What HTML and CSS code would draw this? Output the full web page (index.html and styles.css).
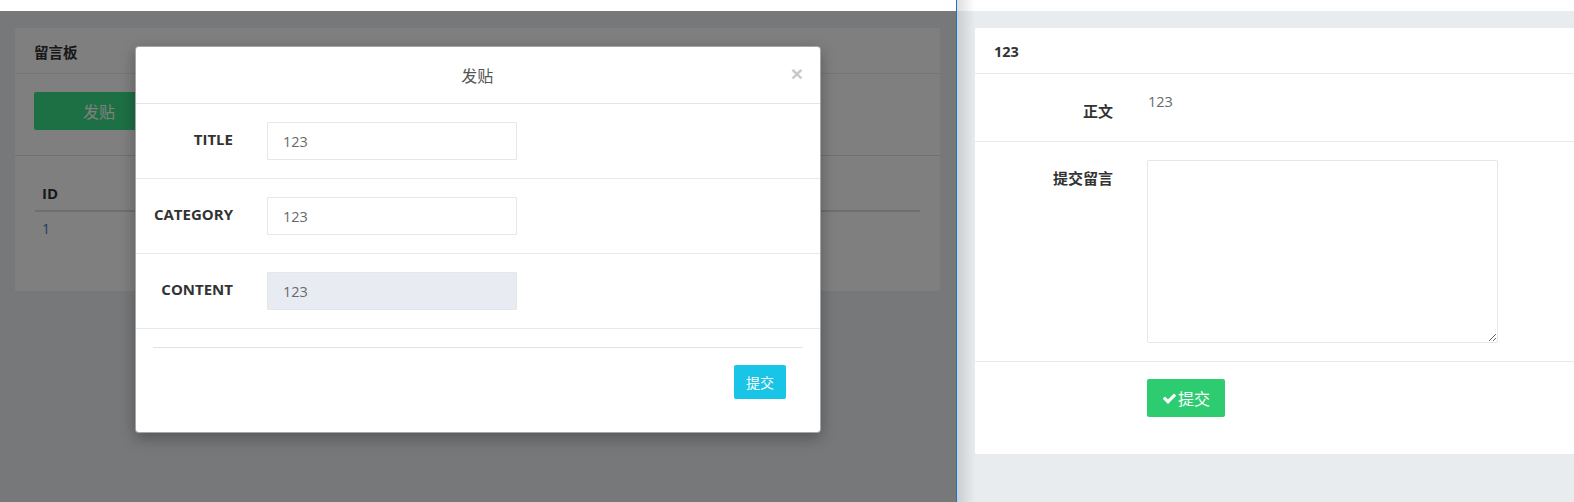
FILE: index.html
```html
<!DOCTYPE html>
<html lang="zh">
<head>
<meta charset="utf-8">
<title>留言板</title>
<link rel="stylesheet" href="styles.css">
</head>
<body>
<div class="screen">
  <div class="pane pane-left">
    <div class="topstrip"></div>
    <div class="viewport">
      <div class="page">
        <div class="card">
          <div class="card-head">留言板</div>
          <div class="card-tools"><button class="btn-post">发贴</button></div>
          <div class="card-body">
            <table class="tbl">
              <thead><tr><th>ID</th></tr></thead>
              <tbody><tr><td><a class="link">1</a></td></tr></tbody>
            </table>
          </div>
        </div>
      </div>
      <div class="overlay"></div>
      <div class="modal">
        <div class="modal-head">
          <div class="modal-title">发贴</div>
          <span class="modal-close">×</span>
        </div>
        <div class="mrow">
          <label class="mlabel">TITLE</label>
          <input class="minput" value="123">
        </div>
        <div class="mrow">
          <label class="mlabel">CATEGORY</label>
          <input class="minput" value="123">
        </div>
        <div class="mrow">
          <label class="mlabel">CONTENT</label>
          <input class="minput minput-ro" value="123" readonly>
        </div>
        <div class="modal-foot">
          <div class="foot-line"></div>
          <div class="foot-actions"><button class="btn-submit">提交</button></div>
        </div>
      </div>
    </div>
  </div>
  <div class="divider"></div>
  <div class="pane pane-right">
    <div class="topstrip"></div>
    <div class="page page-right">
      <div class="card card-detail">
        <div class="card-head">123</div>
        <div class="drow drow-body">
          <div class="dlabel dlabel-body">正文</div>
          <div class="dvalue">123</div>
        </div>
        <div class="drow drow-msg">
          <div class="dlabel dlabel-msg">提交留言</div>
          <textarea class="dtext"></textarea>
        </div>
        <div class="drow drow-act">
          <div class="dlabel"></div>
          <button class="btn-ok"><svg class="ico-check" viewBox="0 0 1792 1792"><path d="M1671 566q0 40-28 68l-724 724-136 136q-28 28-68 28t-68-28l-136-136-362-362q-28-28-28-68t28-68l136-136q28-28 68-28t68 28l294 295 656-657q28-28 68-28t68 28l136 136q28 28 28 68z"/></svg>提交</button>
        </div>
      </div>
    </div>
    <div class="shadow"></div>
  </div>
</div>
</body>
</html>
```

FILE: styles.css
```css
* { box-sizing: border-box; }
html, body { margin: 0; padding: 0; }
body {
  width: 1574px;
  height: 502px;
  overflow: hidden;
  font-family: "Open Sans", "Noto Sans CJK SC", sans-serif;
  font-size: 14px;
  color: #676a6c;
  background: #fff;
}
.screen { display: flex; height: 502px; }
.pane { display: flex; flex-direction: column; height: 502px; }
.pane-left { width: 956px; flex: none; }
.pane-right { flex: 1; position: relative; overflow: hidden; background: #e9ecef; }
.divider { width: 1px; flex: none; background: #1b74cc; }
.topstrip { height: 11px; background: #fff; flex: none; }

.viewport { position: relative; flex: 1; background: #eef0f4; }
.page { padding: 17px 16px 0 15px; }
.card { background: #fff; border-radius: 2px; height: 263px; }
.card-head {
  height: 46px;
  padding: 2px 19px 0;
  display: flex;
  align-items: center;
  font-weight: 700;
  color: #333;
  font-size: 14.5px;
  border-bottom: 1px solid #e7eaec;
}
.card-tools { padding: 18px 19px 25px; border-bottom: 1px solid #e0e0e4; }
.btn-post {
  display: block;
  width: 130px;
  height: 38px;
  border: none;
  border-radius: 2px;
  background: #3ae088;
  color: #fff;
  font-family: "Noto Sans CJK SC", sans-serif;
  font-size: 16px;
}
.card-body { padding: 20px; }
.tbl { width: 100%; border-collapse: collapse; }
.tbl th {
  text-align: left;
  padding: 8px 7px;
  line-height: 18px;
  font-weight: 700;
  font-size: 15px;
  color: #333;
  border-bottom: 2px solid #dcdce2;
}
.tbl td { padding: 8px 7px; line-height: 18px; }
.link { color: #3a76c0; }

.overlay { position: absolute; inset: 0; background: rgba(0,0,0,.5); }
.modal {
  position: absolute;
  top: 35px;
  left: 0;
  right: 0;
  margin: 0 auto;
  width: 686px;
  background: #fff;
  border: 1px solid rgba(0,0,0,.35);
  border-radius: 4px;
  box-shadow: 0 5px 15px rgba(0,0,0,.3);
}
.modal-head {
  height: 57px;
  display: flex;
  align-items: center;
  padding: 0 17px 0 20px;
  border-bottom: 1px solid #e5e5e5;
}
.modal-title {
  flex: 1;
  text-align: center;
  font-family: "Noto Sans CJK SC", sans-serif;
  font-size: 16px;
  color: #555;
  padding-left: 8px;
}
.modal-close {
  font-family: "Liberation Sans", sans-serif;
  font-size: 21px;
  font-weight: 700;
  color: #c8c8c8;
  line-height: 1;
  margin-top: -4px;
}
.mrow {
  display: flex;
  align-items: flex-start;
  padding: 18px 0;
  height: 75px;
  border-bottom: 1px solid #e7eaec;
}
.mlabel {
  width: 97px;
  text-align: right;
  font-weight: 700;
  color: #333;
  font-size: 15px;
  line-height: 35px;
}
.minput {
  margin-left: 34px;
  width: 250px;
  height: 38px;
  border: 1px solid #e5e6e7;
  border-radius: 1px;
  padding: 0 15px;
  font-family: "Open Sans", sans-serif;
  font-size: 14.5px;
  color: #676a6c;
  background: #fff;
  outline: none;
}
.minput-ro { background: #e8ecf2; }
.modal-foot { padding: 18px 17px 33px; }
.foot-line { height: 1px; background: #e2e2e2; }
.foot-actions { display: flex; justify-content: flex-end; padding: 17px 17px 0 0; }
.btn-submit {
  width: 52px;
  height: 34px;
  border: none;
  border-radius: 2px;
  background: #18c5e7;
  color: #fff;
  font-family: "Noto Sans CJK SC", sans-serif;
  font-size: 14px;
  padding: 0;
}

.page-right { padding: 17px 0 0 18px; }
.card-detail { height: 426px; width: 640px; border-radius: 2px 0 0 2px; }
.drow {
  display: flex;
  align-items: flex-start;
  border-bottom: 1px solid #e7eaec;
}
.dlabel {
  width: 138px;
  flex: none;
  text-align: right;
  font-family: "Noto Sans CJK SC", sans-serif;
  font-weight: 700;
  color: #333;
  font-size: 15px;
  line-height: 20px;
}
.drow-body { height: 68px; padding-top: 18px; }
.dlabel-body { padding-top: 9px; }
.dvalue { margin-left: 35px; line-height: 20px; color: #676a6c; font-size: 14.5px; }
.drow-msg { padding: 18px 0; }
.dlabel-msg { padding-top: 8px; }
.dtext {
  margin-left: 34px;
  width: 351px;
  height: 183px;
  border: 1px solid #e5e6e7;
  border-radius: 2px;
  display: block;
  resize: both;
  outline: none;
}
.drow-act { border-bottom: none; padding-top: 17px; }
.btn-ok {
  margin-left: 34px;
  width: 78px;
  height: 38px;
  border: none;
  border-radius: 2px;
  background: #2ecc71;
  color: #fff;
  font-family: "Noto Sans CJK SC", sans-serif;
  font-size: 16px;
  display: flex;
  align-items: center;
  justify-content: center;
  padding: 0;
}
.ico-check { width: 15px; height: 15px; fill: #fff; margin-right: 1px; }
.shadow {
  position: absolute;
  left: 0;
  top: 0;
  bottom: 0;
  width: 18px;
  background: linear-gradient(to right, rgba(0,0,0,.13), rgba(0,0,0,0));
  pointer-events: none;
}
```
